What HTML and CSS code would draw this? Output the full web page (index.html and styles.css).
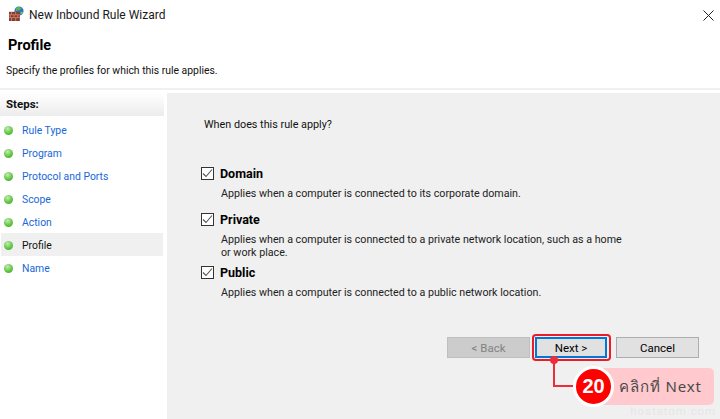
FILE: index.html
```html
<!DOCTYPE html>
<html lang="en">
<head>
<meta charset="utf-8">
<title>New Inbound Rule Wizard</title>
<link rel="stylesheet" href="styles.css">
</head>
<body>
<div class="window">
  <div class="titlebar">
    <svg class="app-icon" width="15" height="15" viewBox="0 0 18 18">
      <circle cx="12" cy="6" r="5.500" fill="#2f74c4"/>
      <path d="M9 2c2-1.500 5-1 6 .5-.5 2-2.500 3-4 2.500-1 1-2 1-3 .5 0-1.500.3-2.500 1-3.500z" fill="#5cb84a"/>
      <path d="M14 7c1.500 0 2.500.5 3 1-.5 1-1.500 2-3 2.500z" fill="#7cc860"/>
      <rect x="0" y="7" width="13" height="11" fill="#8a3a2c"/>
      <path d="M0 10.500h13M0 14h13M3 7v3.500M8 7v3.500M1.500 10.500v3.500M6 10.500v3.500M10.500 10.500v3.500M3 14v4M8 14v4" stroke="#c98a78" stroke-width="1" fill="none"/>
    </svg>
    <span class="title-text">New Inbound Rule Wizard</span>
    <svg class="close-icon" width="11" height="11" viewBox="0 0 11 11">
      <path d="M.5.5l10 10M10.500.5l-10 10" stroke="#222" stroke-width="1" fill="none"/>
    </svg>
  </div>
  <header class="page-head">
    <h1>Profile</h1>
    <p>Specify the profiles for which this rule applies.</p>
  </header>
  <div class="body">
    <nav class="steps">
      <div class="steps-head">Steps:</div>
      <ul class="step-list">
        <li class="step"><i class="dot"></i>Rule Type</li>
        <li class="step"><i class="dot"></i>Program</li>
        <li class="step"><i class="dot"></i>Protocol and Ports</li>
        <li class="step"><i class="dot"></i>Scope</li>
        <li class="step"><i class="dot"></i>Action</li>
        <li class="step current"><i class="dot"></i>Profile</li>
        <li class="step"><i class="dot"></i>Name</li>
      </ul>
    </nav>
    <main class="content">
      <p class="question">When does this rule apply?</p>
      <div class="options">
        <div class="option">
          <div class="opt-label"><span class="check"><svg width="11" height="11" viewBox="0 0 11 11"><path d="M1 5.500l3 3 6-7" stroke="#555" stroke-width="1.100" fill="none"/></svg></span>Domain</div>
          <p class="opt-desc">Applies when a computer is connected to its corporate domain.</p>
        </div>
        <div class="option tall">
          <div class="opt-label"><span class="check"><svg width="11" height="11" viewBox="0 0 11 11"><path d="M1 5.500l3 3 6-7" stroke="#555" stroke-width="1.100" fill="none"/></svg></span>Private</div>
          <p class="opt-desc">Applies when a computer is connected to a private network location, such as a home<br>or work place.</p>
        </div>
        <div class="option">
          <div class="opt-label"><span class="check"><svg width="11" height="11" viewBox="0 0 11 11"><path d="M1 5.500l3 3 6-7" stroke="#555" stroke-width="1.100" fill="none"/></svg></span>Public</div>
          <p class="opt-desc">Applies when a computer is connected to a public network location.</p>
        </div>
      </div>
      <div class="buttons">
        <button class="btn disabled">&lt; Back</button>
        <button class="btn primary">Next &gt;</button>
        <button class="btn cancel">Cancel</button>
      </div>
    </main>
  </div>
  <div class="callout-ring"></div>
  <div class="callout-line"></div>
  <div class="callout-dot"></div>
  <div class="callout-pill">คลิกที่ Next</div>
  <div class="callout-num">20</div>
  <div class="watermark">hostatom.com</div>
</div>
</body>
</html>
```
FILE: styles.css
```css
* { box-sizing: border-box; }
html, body { margin: 0; padding: 0; }
body { width: 720px; height: 419px; overflow: hidden; background: #fff; font-family: Roboto, "Open Sans", sans-serif; font-size: 10.700px; color: #111; }
.window { position: relative; width: 720px; height: 419px; display: flex; flex-direction: column; }
.titlebar { height: 30px; display: flex; align-items: center; padding: 0 7px 0 9px; flex: none; }
.app-icon { flex: none; margin: 0 5px 3px 0; }
.title-text { font-size: 12px; font-weight: 400; color: #1a1a1a; flex: 1; }
.close-icon { margin-right: -1px; }
.page-head { height: 60px; flex: none; border-bottom: 2px solid #f0f0f0; padding: 7px 6px 0; }
.page-head h1 { margin: 0 0 0 2px; font-size: 14.500px; line-height: 18px; font-weight: 700; color: #000; }
.page-head p { margin: 8px 0 0; line-height: 16px; font-size: 10.400px; }
.body { flex: 1; display: flex; min-height: 0; padding-top: 3px; gap: 3px; }
.steps { width: 164px; flex: none; background: #fff; }
.steps-head { height: 23px; padding: 2px 6px 0; font-size: 11.500px; font-weight: 700; line-height: 18px; background: linear-gradient(#fff, #ececec); }
.step-list { list-style: none; margin: 0; padding: 2px 1px 0; }
.step { height: 23px; display: flex; align-items: center; padding: 2px 0 0 3px; color: #1768d8; font-size: 10.400px; }
.step.current { color: #111; background: #f0f0f0; }
.dot { width: 9px; height: 9px; border-radius: 50%; margin-right: 9px; background: radial-gradient(circle at 40% 30%, #c6eab5, #58c33a 60%, #3ea523); flex: none; }
.content { flex: 1; background: #f0f0f0; padding: 24px 21px 0 34px; position: relative; min-width: 0; display: flex; flex-direction: column; }
.question { margin: 0 0 0 3px; line-height: 16px; font-size: 10.800px; }
.options { margin-top: 31px; display: flex; flex-direction: column; }
.option { height: 46px; }
.option.tall { height: 53px; }
.opt-label { display: flex; align-items: center; height: 18px; font-weight: 700; font-size: 12.500px; color: #000; }
.check { width: 13px; height: 13px; border: 1px solid #333; background: #fff; margin-right: 6px; display: flex; align-items: center; justify-content: center; flex: none; }
.opt-desc { margin: 5px 0 0 20px; line-height: 13px; color: #222; }
.buttons { margin-top: auto; margin-bottom: 61px; display: flex; justify-content: flex-end; }
.btn { height: 21px; font-family: inherit; font-size: 11.500px; padding: 0; border: 1px solid #adadad; background: #e1e1e1; color: #000; }
.btn.disabled { width: 83px; background: #ccc; border-color: #bfbfbf; color: #838383; }
.btn.primary { width: 72px; margin-left: 5px; border: 2px solid #0078d7; }
.btn.cancel { width: 83px; margin-left: 9px; }
.callout-ring { position: absolute; left: 532px; top: 334px; width: 79px; height: 27px; border: 2px solid #ed1c24; border-radius: 4px; }
.callout-line { position: absolute; left: 553px; top: 360px; width: 24px; height: 27px; border-left: 2px solid #ed2d3a; border-bottom: 2px solid #ed2d3a; }
.callout-dot { position: absolute; left: 550px; top: 356px; width: 8px; height: 8px; border-radius: 50%; background: #ed2d3a; }
.callout-pill { position: absolute; left: 590px; top: 368px; width: 124px; height: 37px; padding-left: 29px; border-radius: 0 5px 5px 0; background: #ffc9ce; color: #4a4a4a; font-family: "Noto Sans", "Open Sans", sans-serif; font-size: 15px; line-height: 36px; letter-spacing: .9px; white-space: nowrap; }
.callout-num { position: absolute; left: 573px; top: 366px; width: 41px; height: 41px; border-radius: 50%; border: 3px solid #fff; background: #f00; color: #fff; font-family: "Liberation Sans", sans-serif; font-size: 20px; font-weight: 700; line-height: 35px; text-align: center; }
.watermark { position: absolute; right: 4px; bottom: 0; font-size: 11.500px; line-height: 15px; letter-spacing: .9px; color: #e6e6e6; }
```
